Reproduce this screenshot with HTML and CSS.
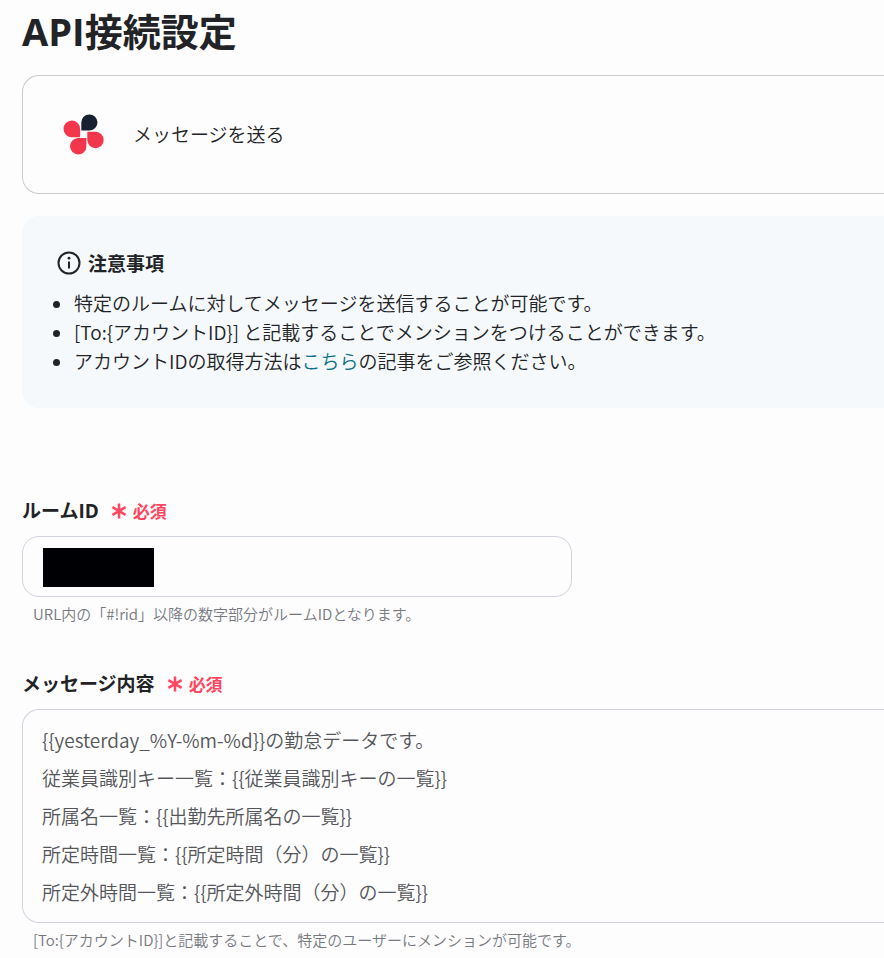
FILE: index.html
```html
<!DOCTYPE html>
<html lang="ja">
<head>
<meta charset="utf-8">
<meta name="viewport" content="width=device-width, initial-scale=1">
<title>API接続設定</title>
<link rel="stylesheet" href="styles.css">
</head>
<body>
<main class="page">
  <h1 class="title">API接続設定</h1>

  <section class="action-card">
    <svg class="app-logo" viewBox="0 0 42 42" aria-hidden="true">
      <path class="petal-dark" d="M18.3 17.6V9.5a8.1 8.1 0 1 1 8.3 8.1z"/>
      <path class="petal" d="M17.1 24.2H9a8.3 8.3 0 1 1 8.1-8.3z"/>
      <path class="petal" d="M24.3 18.8h8.3a8.2 8.2 0 1 1-8.3 8.3z"/>
      <path class="petal" d="M23.4 25.1v8.3a8.2 8.2 0 1 1-8.3-8.3z"/>
    </svg>
    <span>メッセージを送る</span>
  </section>

  <section class="notice">
    <h2 class="notice-title">
      <svg class="info-icon" viewBox="0 0 24 24" aria-hidden="true">
        <circle class="info-ring" cx="12" cy="12" r="10.5"/>
        <path class="info-stem" d="M12 10.5v7"/>
        <circle cx="12" cy="7.2" r="1.4"/>
      </svg>
      注意事項
    </h2>
    <ul class="notice-list">
      <li>特定のルームに対してメッセージを送信することが可能です。</li>
      <li>[To:{アカウントID}] と記載することでメンションをつけることができます。</li>
      <li>アカウントIDの取得方法は<a href="#">こちら</a>の記事をご参照ください。</li>
    </ul>
  </section>

  <form class="form">
    <div class="field">
      <div class="field-head">
        <label for="room-id">ルームID</label>
        <span class="required">
          <svg class="asterisk" viewBox="0 0 16 16" aria-hidden="true"><path d="M8 .5v15M1.4 4.2l13.2 7.6M14.6 4.2L1.4 11.8"/></svg>
          必須
        </span>
      </div>
      <div class="control text-control">
        <span class="mask"></span>
        <input id="room-id" type="text" aria-describedby="room-help">
      </div>
      <p class="help" id="room-help">URL内の「#!rid」以降の数字部分がルームIDとなります。</p>
    </div>

    <div class="field">
      <div class="field-head">
        <label for="message">メッセージ内容</label>
        <span class="required">
          <svg class="asterisk" viewBox="0 0 16 16" aria-hidden="true"><path d="M8 .5v15M1.4 4.2l13.2 7.6M14.6 4.2L1.4 11.8"/></svg>
          必須
        </span>
      </div>
      <textarea class="control area-control" id="message" rows="5" aria-describedby="message-help">{{yesterday_%Y-%m-%d}}の勤怠データです。
従業員識別キー一覧：{{従業員識別キーの一覧}}
所属名一覧：{{出勤先所属名の一覧}}
所定時間一覧：{{所定時間（分）の一覧}}
所定外時間一覧：{{所定外時間（分）の一覧}}</textarea>
      <p class="help" id="message-help">[To:{アカウントID}]と記載することで、特定のユーザーにメンションが可能です。</p>
    </div>
  </form>
</main>
</body>
</html>
```
FILE: styles.css
```css
* {
  box-sizing: border-box;
}

body {
  margin: 0;
  background: #fdfdfe;
  color: #222326;
  font-family: "Noto Sans CJK JP", sans-serif;
  font-size: 19px;
  font-weight: 350;
  line-height: 29px;
}

.page {
  padding: 7px 0 0 22px;
}

.title {
  margin: 0 0 20px;
  font-family: "Open Sans", "Noto Sans CJK JP", sans-serif;
  font-size: 38px;
  font-weight: 700;
  line-height: 48px;
}

.action-card {
  display: flex;
  align-items: center;
  gap: 28px;
  min-height: 119px;
  padding: 0 40px 2px;
  border: 1px solid #c9cacd;
  border-right: 0;
  border-radius: 17px 0 0 17px;
  background: #fdfdfe;
}

.app-logo {
  width: 42px;
  height: 42px;
}

.petal {
  fill: #f4364c;
}

.petal-dark {
  fill: #172131;
}

.notice {
  margin-top: 22px;
  padding: 32px 35px 33px;
  border-radius: 17px 0 0 17px;
  background: #f5f9fc;
}

.notice-title {
  display: flex;
  align-items: center;
  gap: 7px;
  margin: 0 0 11px;
  font-size: 19px;
  font-weight: 700;
  line-height: 29px;
}

.info-icon {
  width: 24px;
  height: 24px;
  fill: #222326;
}

.info-ring {
  fill: none;
  stroke: #222326;
  stroke-width: 2;
}

.info-stem {
  stroke: #222326;
  stroke-width: 2;
}

.notice-list {
  margin: 0;
  padding-left: 17px;
}

.notice-list a {
  color: #0b6f85;
  text-decoration: none;
}

.form {
  display: flex;
  flex-direction: column;
  gap: 44px;
  margin-top: 89px;
}

.field-head {
  display: flex;
  align-items: center;
  gap: 12px;
  margin-bottom: 10px;
}

.field-head label {
  font-family: "Open Sans", "Noto Sans CJK JP", sans-serif;
  font-weight: 700;
}

.required {
  display: flex;
  align-items: center;
  gap: 6px;
  padding-bottom: 2px;
  color: #ff4560;
  font-size: 17px;
  font-weight: 700;
  line-height: 25px;
}

.asterisk {
  width: 16px;
  height: 16px;
  fill: none;
  stroke: #ff4560;
  stroke-width: 2.5;
}

.control {
  border: 1px solid #cfd3de;
  border-radius: 17px;
  background: #fdfdfe;
}

.text-control {
  display: flex;
  align-items: center;
  max-width: 550px;
  height: 61px;
  padding: 1px 20px 0;
}

.text-control input {
  flex: 1;
  min-width: 0;
  border: 0;
  outline: 0;
  background: none;
  font: inherit;
}

.mask {
  width: 111px;
  height: 39px;
  background: #000004;
}

.area-control {
  display: block;
  width: 100%;
  height: 214px;
  padding: 11px 19px;
  border-right: 0;
  border-radius: 17px 0 0 17px;
  outline: 0;
  overflow: hidden;
  resize: none;
  color: #55565a;
  font: inherit;
  line-height: 38px;
}

.help {
  margin: 5px 0 0 11px;
  color: #77797e;
  font-size: 15px;
  line-height: 24px;
}
```
